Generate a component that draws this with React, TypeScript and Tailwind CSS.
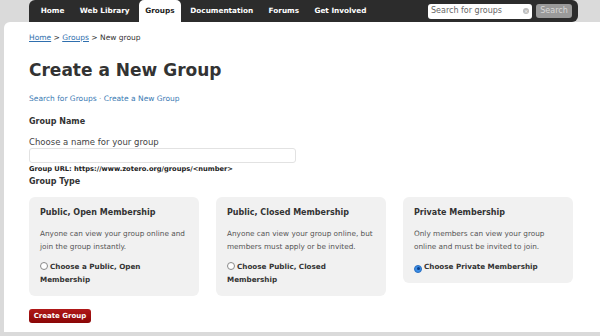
import React from "react";

const NAV = ["Home", "Web Library", "Groups", "Documentation", "Forums", "Get Involved"];

const CARDS = [
  {
    title: "Public, Open Membership",
    desc: "Anyone can view your group online and join the group instantly.",
    choice: "Choose a Public, Open Membership",
    checked: false,
  },
  {
    title: "Public, Closed Membership",
    desc: "Anyone can view your group online, but members must apply or be invited.",
    choice: "Choose Public, Closed Membership",
    checked: false,
  },
  {
    title: "Private Membership",
    desc: "Only members can view your group online and must be invited to join.",
    choice: "Choose Private Membership",
    checked: true,
  },
];

function Radio({ checked }: { checked: boolean }) {
  if (checked) {
    return (
      <span className="inline-flex items-center justify-center w-[8px] h-[8px] rounded-full bg-[#3b8de6] border border-[#2a6fc0] mr-[2px] align-[-1px]">
        <span className="w-[3px] h-[3px] rounded-full bg-[#0b3f8a]" />
      </span>
    );
  }
  return (
    <span className="inline-block w-[8px] h-[8px] rounded-full bg-white border border-[#8a8a8a] mr-[2px] align-[-1px]" />
  );
}

export default function App() {
  return (
    <div className="w-[600px] h-[336px] overflow-hidden bg-[#dadada] font-['DejaVu_Sans',Verdana,sans-serif] text-[#333]">
      {/* Top nav */}
      <div className="flex h-[22px]">
        <div className="ml-[29px] w-[549px] h-[22px] bg-[#2c2c2c] rounded-t-[6px] rounded-br-[6px] flex items-end pl-[4px] pr-[6px]">
          {NAV.map((item) => (
            <div
              key={item}
              className={
                item === "Groups"
                  ? "h-[22px] px-[6px] mx-[2px] flex items-center bg-white rounded-t-[5px] text-[#222] text-[7.3px] font-bold"
                  : "h-[22px] px-[7.7px] flex items-center text-white text-[7.3px] font-bold"
              }
            >
              {item}
            </div>
          ))}
          <div className="ml-auto self-center flex items-center gap-[4px]">
            <div className="w-[104px] h-[15px] bg-white rounded-[3px] flex items-center px-[3px] text-[8px] text-[#666]">
              <span className="flex-1">Search for groups</span>
              <span className="w-[6px] h-[6px] rounded-full bg-[#bbb] flex items-center justify-center text-white text-[5px] leading-none">
                ×
              </span>
            </div>
            <div className="w-[36px] h-[14px] bg-[#9a9a9a] rounded-[3px] flex items-center justify-center text-[8px] text-[#d8d8d8]">
              Search
            </div>
          </div>
        </div>
      </div>

      {/* Content panel */}
      <div className="ml-[4px] h-[310px] bg-white rounded-tl-[6px] pl-[25px] pt-[10px]">
        <div className="text-[7.5px] leading-[12px] text-[#333]">
          <span className="text-[#2f6fae] underline">Home</span> &gt;{" "}
          <span className="text-[#2f6fae] underline">Groups</span> &gt; New group
        </div>

        <h1 className="mt-[14px] text-[17px] leading-[24px] font-bold text-[#333]">Create a New Group</h1>

        <div className="mt-[11px] text-[7.5px] leading-[12px] text-[#3a7ab3]">
          Search for Groups <span className="text-[#999]">·</span> Create a New Group
        </div>

        <div className="mt-[11px] text-[8px] leading-[12px] font-bold">Group Name</div>
        <div className="mt-[8px] text-[8.5px] leading-[12px] text-[#444]">Choose a name for your group</div>
        <div className="w-[267px] h-[15px] border border-[#e2e2e2] rounded-[3px] bg-white" />
        <div className="mt-[1px] text-[6.7px] leading-[10px] font-bold text-[#222]">
          Group URL: https://www.zotero.org/groups/&lt;number&gt;
        </div>
        <div className="mt-[2px] text-[8px] leading-[12px] font-bold">Group Type</div>

        <div className="mt-[9px] flex items-start gap-[17px] w-[544px]">
          {CARDS.map((c) => (
            <div key={c.title} className="w-[170px] bg-[#f1f1f1] rounded-[6px] pt-[10px] pb-[10px] pl-[11px] pr-[10px]">
              <div className="text-[8px] leading-[12px] font-bold text-[#333]">{c.title}</div>
              <div className="mt-[8px] text-[7.3px] leading-[13px] text-[#555]">{c.desc}</div>
              <div className="mt-[7px] text-[7.2px] leading-[13px] font-bold text-[#333]">
                <Radio checked={c.checked} />
                {c.choice}
              </div>
            </div>
          ))}
        </div>

        <button className="mt-[13px] h-[14px] w-[62px] rounded-[3px] bg-gradient-to-b from-[#b01818] to-[#8a0606] text-white text-[7px] font-bold leading-none flex items-center justify-center">
          Create Group
        </button>
      </div>
    </div>
  );
}
